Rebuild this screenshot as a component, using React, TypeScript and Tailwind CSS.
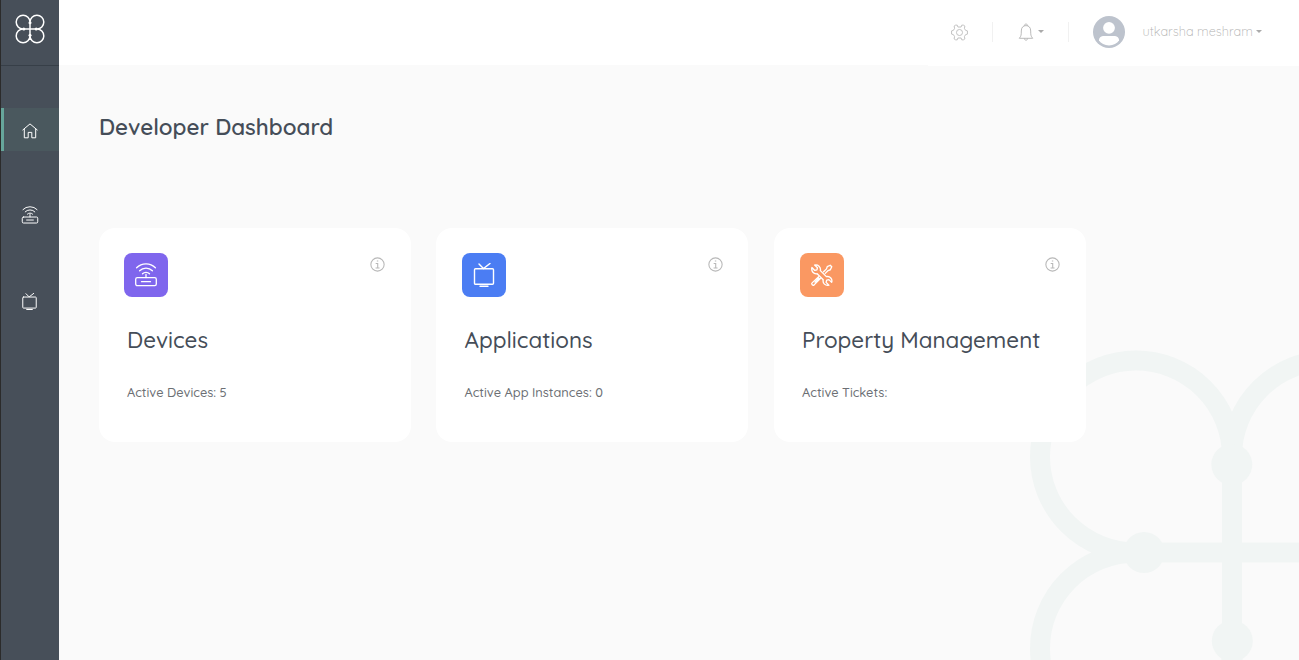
import type { ReactNode } from "react";

function Clover({ className }: { className: string }) {
  return (
    <svg viewBox="0 0 30 30" className={className} fill="none" stroke="#fff" strokeWidth="1.500">
      <path d="M15 8A6.9 6.9 0 1 0 8 15H22A6.9 6.9 0 1 0 15 8V22A6.9 6.9 0 1 0 22 15H8A6.9 6.9 0 1 0 15 22Z" />
      <g fill="#fff" stroke="none">
        <circle cx="15" cy="8.800" r="1.500" />
        <circle cx="15" cy="21.200" r="1.500" />
        <circle cx="8.800" cy="15" r="1.500" />
        <circle cx="21.200" cy="15" r="1.500" />
      </g>
    </svg>
  );
}

function BackgroundClover() {
  return (
    <svg viewBox="0 0 269 310" className="absolute right-0 bottom-0 h-[310px] w-[269px]" fill="none" stroke="#f1f5f4" strokeWidth="20">
      <path d="M202 106A96 96 0 1 0 106 202.500H298A96 96 0 1 0 202 106V298.500A96 96 0 1 0 298 202.500H106A96 96 0 1 0 202 298.500Z" />
      <g fill="#f1f5f4" stroke="none">
        <circle cx="201.800" cy="114.500" r="20.500" />
        <circle cx="114" cy="202.500" r="20.500" />
        <circle cx="202.300" cy="291" r="20.500" />
      </g>
    </svg>
  );
}

function RouterIcon({ className, width }: { className: string; width: number }) {
  return (
    <svg viewBox="0 0 24 24" className={className} fill="none" stroke="#fff" strokeWidth={width} strokeLinecap="round">
      <rect x="1.700" y="14.700" width="20.600" height="8" rx="1.600" />
      <path d="M7.500 18.700h9M12 14.500V11.300M8.500 10.800a4.800 4.800 0 0 1 7 0M5.600 7.800a8.800 8.800 0 0 1 12.800 0M2.600 4.800a13 13 0 0 1 18.800 0" />
    </svg>
  );
}

function TvIcon({ className, width }: { className: string; width: number }) {
  return (
    <svg viewBox="0 0 24 24" className={className} fill="none" stroke="#fff" strokeWidth={width} strokeLinecap="round">
      <rect x="2.500" y="5.700" width="19" height="15.600" rx="1" />
      <path d="M7 1l4.500 4.500L18 .5M8 23.300h8" />
    </svg>
  );
}

function ToolsIcon() {
  return (
    <svg viewBox="0 0 24 24" className="size-[23px]" fill="none" stroke="#fff" strokeWidth="1.400" strokeLinejoin="round" strokeLinecap="round">
      <path d="M2 3.700l3 3 2.200-.6.600-2.200-3-2.800c3.500-.8 6.800 1.900 6 5.800l6.300 6.300c3.800-.9 6.600 2.500 5.500 6l-2.900-2.900-2.300.6-.6 2.300 2.900 2.900c-3.600 1-6.800-2-5.900-5.700L7.500 10.100C3.900 10.900 1 7.500 2 3.700Z" />
      <path d="M14.200 8.100l3-3 .8-2.300 3.100-1.500 1.600 1.600-1.500 3.100-2.300.8-3 3M9 13.300l-6.800 6.400c-1.200 1.200.8 3.300 2.100 2.100l6.500-6.700M5.200 18.900l4.100-4" />
    </svg>
  );
}

function HomeIcon() {
  return (
    <svg viewBox="0 0 16 16" className="size-[16px]" fill="none" stroke="#fff" strokeWidth="1" strokeLinejoin="round">
      <path d="M.5 7.200L8 .900l7.500 6.300M2.300 6v8.800h3.900V9.400h3.600v5.400h3.900V6" />
    </svg>
  );
}

function GearIcon() {
  return (
    <svg viewBox="0 0 18 18" className="size-[17px]" fill="none" stroke="#b8b8b8" strokeWidth=".9" strokeLinejoin="round">
      <circle cx="9" cy="9" r="3.200" />
      <path d="M7.300 3.200L6.600 1.200H4.900L3.300 2.200l.5 2.400L2.600 6.700.6 7.300v3.400l2 .6 1.200 2.100-.5 2.400 1.600 1h1.700l.7-2h3.400l.7 2h1.700l1.600-1-.5-2.400 1.200-2.100 2-.6V7.300l-2-.6-1.200-2.100.5-2.400-1.600-1h-1.700l-.7 2Z" />
    </svg>
  );
}

function BellIcon() {
  return (
    <svg viewBox="0 0 16 18" className="h-[18px] w-[16px]" fill="none" stroke="#b2b2b2" strokeWidth=".9" strokeLinejoin="round">
      <path d="M6.300 2.800C6.300.5 9.700.5 9.700 2.800M1.300 15.300c2-2 2-4 2-7.300C3.300 4.400 5.300 2.600 8 2.600S12.700 4.400 12.700 8c0 3.300 0 5.300 2 7.300ZM6.400 15.500c0 2.200 3.200 2.200 3.200 0" />
    </svg>
  );
}

function InfoIcon() {
  return (
    <svg viewBox="0 0 14 14" className="mt-[4px] size-[15px]" fill="none" stroke="#b8b8b8" strokeWidth="1">
      <circle cx="7" cy="7" r="6.200" />
      <path d="M5.300 6h1.900v4.200M5.200 10.300h3.700M6.400 3.800h1.300" />
    </svg>
  );
}

function Avatar() {
  return (
    <svg viewBox="0 0 32 32" className="size-[32px]">
      <circle cx="16" cy="16" r="16" fill="#bdc3cd" />
      <circle cx="16" cy="11.800" r="5.900" fill="#fff" />
      <path d="M11.500 20h9c4 0 5.700 2 5.500 4.600C24 27.300 20.500 29.400 16 29.400S8 27.300 6 24.600C5.800 22 7.500 20 11.500 20Z" fill="#fff" />
    </svg>
  );
}

function Caret() {
  return <span className="mb-[2px] h-0 w-0 border-x-[3px] border-t-[3px] border-x-transparent border-t-[#aaaaaa]" />;
}

interface CardProps {
  title: string;
  detail: string;
  tile: string;
  icon: ReactNode;
}

function Card({ title, detail, tile, icon }: CardProps) {
  return (
    <section className="h-[214px] w-[312px] rounded-[16px] bg-white pt-[25px] pr-[25.500px] pl-[25.550px]">
      <div className="flex items-start justify-between">
        <div className={`flex size-[44px] items-center justify-center rounded-[8px] ${tile}`}>{icon}</div>
        <InfoIcon />
      </div>
      <h2 className="mt-[27px] ml-[2.500px] text-[22.400px] leading-[32px] font-medium whitespace-nowrap text-[#454d58]">{title}</h2>
      <p className="mt-[26px] ml-[2.500px] text-[12.800px] leading-[20px] font-medium whitespace-nowrap text-[#6c6f74]">{detail}</p>
    </section>
  );
}

export default function App() {
  return (
    <div className="flex h-[660px] w-[1299px] overflow-hidden bg-[#fafafa] font-[Quicksand,Lato,sans-serif]">
      <aside className="flex w-[59px] shrink-0 flex-col border-l border-[#2b2b2b] bg-[#474f59]">
        <div className="flex h-[66px] justify-center border-b border-b-[#373f48] pt-[14px]">
          <Clover className="size-[30px]" />
        </div>
        <nav className="flex flex-col pt-[42px]">
          <a className="flex h-[43px] items-center justify-center border-l-[3px] border-[#66a69b] bg-[#4a585e] pt-[3px] pr-[3px]"><HomeIcon /></a>
          <a className="mt-[43px] flex h-[43px] items-center justify-center pb-px"><RouterIcon className="size-[18px]" width={1.3} /></a>
          <a className="mt-[43px] flex h-[43px] items-center justify-center pr-px"><TvIcon className="size-[17px]" width={1.4} /></a>
        </nav>
      </aside>
      <div className="relative flex flex-1 flex-col">
        <BackgroundClover />
        <header className="relative flex h-[66px] items-start">
          <div className="h-[65px] w-[869px] bg-white" />
          <div className="flex h-[66px] flex-1 items-center bg-white pb-[2px] pl-[23px]">
            <GearIcon />
            <span className="ml-[24px] h-[20px] w-px bg-[#f1f1f1]" />
            <div className="ml-[25px] flex items-center gap-[4px]">
              <BellIcon />
              <Caret />
            </div>
            <span className="ml-[24px] h-[20px] w-px bg-[#f1f1f1]" />
            <div className="ml-[24px] flex items-center">
              <Avatar />
              <span className="ml-[17.500px] w-[113.500px] text-[12.800px] font-light whitespace-nowrap text-[#b0b0b0]">utkarsha meshram</span>
              <Caret />
            </div>
          </div>
        </header>
        <main className="relative pt-[45px] pl-[39.900px]">
          <h1 className="text-[22.400px] leading-[32px] font-semibold text-[#454d58]">Developer Dashboard</h1>
          <div className="mt-[85px] flex gap-[25.550px]">
            <Card title="Devices" detail="Active Devices: 5" tile="bg-[#7f66ed]" icon={<RouterIcon className="size-[24px]" width={1.3} />} />
            <Card title="Applications" detail="Active App Instances: 0" tile="bg-[#4b7df3]" icon={<TvIcon className="size-[24px]" width={1.4} />} />
            <Card title="Property Management" detail="Active Tickets:" tile="bg-[#fa9862]" icon={<ToolsIcon />} />
          </div>
        </main>
      </div>
    </div>
  );
}
